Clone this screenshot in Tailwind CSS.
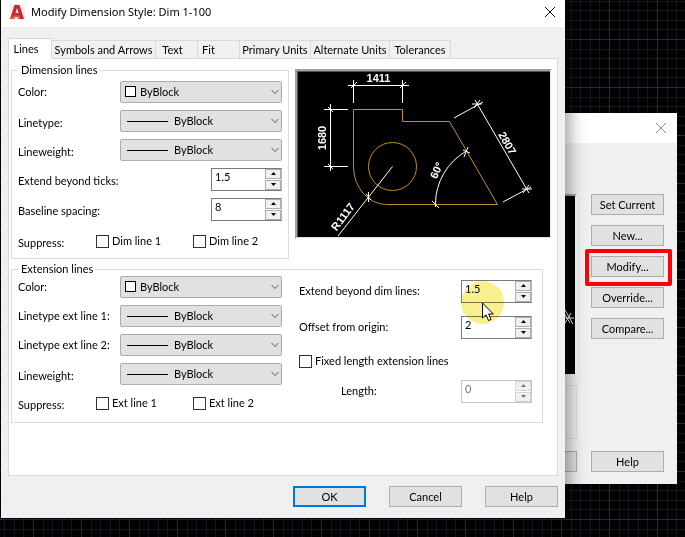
<!DOCTYPE html>
<html lang="en">
<head>
    <meta charset="UTF-8">
    <meta name="viewport" content="width=device-width, initial-scale=1.0">
    <title>Modify Dimension Style</title>
    <script src="https://cdn.jsdelivr.net/npm/@tailwindcss/browser@4"></script>
</head>
<body class="relative h-screen min-h-[520px] overflow-hidden bg-black font-[Lato,'Liberation_Sans',sans-serif] text-[11px] leading-4 text-black">
    <!-- drawing grid -->
    <svg class="absolute inset-0 size-full" aria-hidden="true">
        <defs>
            <pattern id="grid" x="33" y="39" width="48" height="48" patternUnits="userSpaceOnUse">
                <path d="M10.5 0V48M19.5 0V48M29.5 0V48M38.5 0V48M0 10.5H48M0 19.5H48M0 29.5H48M0 38.5H48" stroke="#17171e"/>
                <path d="M.5 0V48M0 .5H48" stroke="#2d2d38"/>
            </pattern>
        </defs>
        <rect width="100%" height="100%" fill="#020204"/>
        <rect width="100%" height="100%" fill="url(#grid)"/>
    </svg>

    <!-- Dimension Style Manager -->
    <section class="absolute top-[113px] right-2 left-[400px] flex h-[371px] flex-col bg-[#f0f0f0]">
        <header class="flex h-[30px] items-center justify-end bg-white px-2.5">
            <button aria-label="Close manager"><svg class="size-3" viewBox="0 0 12 12" stroke="#8a8a8a" fill="none"><path d="M1 1L11 11M11 1L1 11"/></svg></button>
        </header>
        <div class="flex grow justify-end gap-3.5 pt-[51px] pr-[13px]">
            <div class="flex w-[160px] flex-col">
                <svg class="h-[180px] w-full border-t-2 border-r-2 border-t-[#a0a0a0] border-r-white bg-black" viewBox="0 0 158 178" fill="none" stroke="#fff"><path d="M140 100L156 128M146 122H157M147 117L153 127M154 117L148 127"/></svg>
                <div class="mt-[11px] h-[54px] border border-[#dcdcdc]"></div>
                <button class="mt-3 h-[21px] border border-[#adadad] bg-[#e1e1e1]" aria-label="Close"></button>
            </div>
            <div class="flex w-[73px] flex-col gap-2.5">
                <button class="h-[21px] border border-[#adadad] bg-[#e1e1e1]">Set Current</button>
                <button class="h-[21px] border border-[#adadad] bg-[#e1e1e1]">New...</button>
                <div class="relative flex flex-col">
                    <button class="h-[21px] border border-[#adadad] bg-[#e1e1e1]">Modify...</button>
                    <div class="pointer-events-none absolute -top-[7px] -right-2 -bottom-[9px] -left-1.5 z-10 rounded-xs border-4 border-[#fb0007]"></div>
                </div>
                <button class="h-[21px] border border-[#adadad] bg-[#e1e1e1]">Override...</button>
                <button class="h-[21px] border border-[#adadad] bg-[#e1e1e1]">Compare...</button>
                <button class="mt-auto mb-3 h-[21px] border border-[#adadad] bg-[#e1e1e1]">Help</button>
            </div>
        </div>
    </section>

    <!-- Modify Dimension Style -->
    <section class="absolute top-0 right-[120px] left-px bg-[#f0f0f0] shadow-[4px_0_16px_rgba(0,0,0,0.4)]">
        <header class="flex h-[27px] items-center bg-white pr-2.5 pb-1 pl-2">
            <svg class="mr-1.5 size-4" viewBox="0 0 16 16"><path d="M0 0H16V16H0Z" fill="#fbeeee"/><path d="M1 15L5.500 1H10.500L15 15H11L10 12H6.500L5 15Z" fill="#c8282d"/><path d="M8 4L6.500 9H9.700Z" fill="#fbeeee"/><path d="M1 15L5 11.500H10.600L11 15H9L8.500 13H6L5 15Z" fill="#e25a4e"/></svg>
            <h1 class="font-['Noto_Sans',sans-serif] text-[11px] text-black">Modify Dimension Style: Dim 1-100</h1>
            <button class="ml-auto" aria-label="Close dialog"><svg class="size-2.5" viewBox="0 0 10 10" stroke="#111" fill="none"><path d="M0 0L10 10M10 0L0 10"/></svg></button>
        </header>

        <div class="px-[7px] pt-[11px]">
            <nav class="flex h-5 items-end">
                <button class="relative z-10 -mb-px h-[21px] w-11 border border-b-0 border-[#d9d9d9] bg-white pr-2">Lines</button>
                <button class="h-[18px] w-[104px] border-t border-r border-[#d9d9d9]">Symbols and Arrows</button>
                <button class="h-[18px] w-[42px] border-t border-r border-[#d9d9d9] pr-2">Text</button>
                <button class="h-[18px] w-[42px] border-t border-r border-[#d9d9d9] pr-5">Fit</button>
                <button class="h-[18px] w-[71px] border-t border-r border-[#d9d9d9]">Primary Units</button>
                <button class="h-[18px] w-[79px] border-t border-r border-[#d9d9d9]">Alternate Units</button>
                <button class="h-[18px] w-[61px] border-t border-r border-[#d9d9d9]">Tolerances</button>
            </nav>

            <main class="h-[418px] border border-[#d9d9d9] bg-white pt-[3px] pr-[5px] pl-[2px]">
                <div class="flex gap-1.5">
                    <fieldset class="h-[197px] w-[278px] border border-[#dcdcdc] pr-1.5 pl-1.5">
                        <legend class="px-[3px]">Dimension lines</legend>
                        <div class="flex flex-col gap-1.5 pt-0.5">
                            <div class="flex h-[23px] items-center justify-between">
                                <label for="dimColor">Color:</label>
                                <div class="relative w-[162px]">
                                    <select id="dimColor" class="h-[22px] w-full appearance-none rounded-xs border border-[#adadad] bg-[#e1e1e1] pl-[19px]"><option>ByBlock</option></select>
                                    <span class="pointer-events-none absolute top-[5px] left-[5px] size-[11px] border border-black bg-white"></span>
                                    <svg class="pointer-events-none absolute top-2 right-[3px] h-1.5 w-2" viewBox="0 0 8 6" fill="none" stroke="#555"><path d="M.5 1L4 4.500L7.500 1"/></svg>
                                </div>
                            </div>
                            <div class="flex h-[23px] items-center justify-between">
                                <label for="dimLinetype" class="pt-1">Linetype:</label>
                                <div class="relative w-[162px]">
                                    <select id="dimLinetype" class="h-[22px] w-full appearance-none rounded-xs border border-[#adadad] bg-[#e1e1e1] pl-[53px]"><option>ByBlock</option></select>
                                    <span class="pointer-events-none absolute top-[11px] left-[7px] h-px w-[41px] bg-black"></span>
                                    <svg class="pointer-events-none absolute top-2 right-[3px] h-1.5 w-2" viewBox="0 0 8 6" fill="none" stroke="#555"><path d="M.5 1L4 4.500L7.500 1"/></svg>
                                </div>
                            </div>
                            <div class="flex h-[23px] items-center justify-between">
                                <label for="dimLineweight" class="pt-1">Lineweight:</label>
                                <div class="relative w-[162px]">
                                    <select id="dimLineweight" class="h-[22px] w-full appearance-none rounded-xs border border-[#adadad] bg-[#e1e1e1] pl-[53px]"><option>ByBlock</option></select>
                                    <span class="pointer-events-none absolute top-[11px] left-[7px] h-px w-[41px] bg-black"></span>
                                    <svg class="pointer-events-none absolute top-2 right-[3px] h-1.5 w-2" viewBox="0 0 8 6" fill="none" stroke="#555"><path d="M.5 1L4 4.500L7.500 1"/></svg>
                                </div>
                            </div>
                            <div class="flex h-6 items-center justify-between">
                                <label for="ticks" class="pt-1">Extend beyond ticks:</label>
                                <div class="flex h-[23px] w-[71px] border border-[#7a7a7a] border-r-[#b4b4b4]">
                                    <input id="ticks" type="text" value="1.5" class="mb-1 min-w-0 grow pl-[3px]">
                                    <div class="flex w-4 shrink-0 flex-col gap-px">
                                        <button class="flex grow items-center justify-center border border-[#adadad] bg-[#f0f0f0]" aria-label="Increase ticks"><svg class="h-[3px] w-[5px]" viewBox="0 0 5 3"><path d="M0 3L2.500 0L5 3Z"/></svg></button>
                                        <button class="flex grow items-center justify-center border border-[#adadad] bg-[#f0f0f0]" aria-label="Decrease ticks"><svg class="h-[3px] w-[5px]" viewBox="0 0 5 3"><path d="M0 0L2.500 3L5 0Z"/></svg></button>
                                    </div>
                                </div>
                            </div>
                            <div class="flex h-6 items-center justify-between">
                                <label for="baseline" class="pt-1">Baseline spacing:</label>
                                <div class="flex h-[23px] w-[71px] border border-[#7a7a7a] border-r-[#b4b4b4]">
                                    <input id="baseline" type="text" value="8" class="mb-1 min-w-0 grow pl-[3px]">
                                    <div class="flex w-4 shrink-0 flex-col gap-px">
                                        <button class="flex grow items-center justify-center border border-[#adadad] bg-[#f0f0f0]" aria-label="Increase spacing"><svg class="h-[3px] w-[5px]" viewBox="0 0 5 3"><path d="M0 3L2.500 0L5 3Z"/></svg></button>
                                        <button class="flex grow items-center justify-center border border-[#adadad] bg-[#f0f0f0]" aria-label="Decrease spacing"><svg class="h-[3px] w-[5px]" viewBox="0 0 5 3"><path d="M0 0L2.500 3L5 0Z"/></svg></button>
                                    </div>
                                </div>
                            </div>
                            <div class="flex h-7 items-center">
                                <span class="w-[78px] pt-1">Suppress:</span>
                                <label class="flex w-[97px] items-center gap-[3px]"><input type="checkbox" class="size-[13px] appearance-none border border-[#333] bg-white">Dim line 1</label>
                                <label class="flex items-center gap-[3px]"><input type="checkbox" class="size-[13px] appearance-none border border-[#333] bg-white">Dim line 2</label>
                            </div>
                        </div>
                    </fieldset>

                    <svg class="mt-[7px] h-[170px] min-w-0 grow" viewBox="295 69 257 170" fill="none" stroke="#fff" font-family="Liberation Sans, sans-serif" font-size="11" font-weight="bold" text-anchor="middle">
                        <path d="M295 69H552L550 71H297V237L295 239Z" fill="#a0a0a0" stroke="none"/>
                        <rect x="297" y="71" width="253" height="166" fill="#000" stroke="none"/>
                        <path d="M297 71.500H550M297.500 71V237" stroke="#555"/>
                        <path d="M297 237.500H550.500V71" stroke="#e3e3e3"/>
                        <g stroke="#c0902a">
                            <path d="M353.500 109.500H402.500V121.500H449.500L497.500 204.500H386.500A33 38 0 0 1 353.500 166.500Z"/>
                            <circle cx="392.500" cy="166.500" r="24"/>
                        </g>
                        <path d="M348 85.500H409M353.500 80V103M402.500 80V103M351 88L357 82M400 88L406 82"/>
                        <path d="M330.500 104V171M324 109.500H348M324 166.500H348M328 107L333 112M328 164L333 169"/>
                        <path d="M475 100L529 193M454 118L483 102M503 202L531 187M472 104H482M480 100L474 108M522 189H532M523 193L529 185"/>
                        <path d="M435.500 204.500A61 61 0 0 1 466.500 151M432 201L439 208M463 150L470 153M468 147L464 157M435.500 204V207"/>
                        <path d="M392.500 166.500L338 236M368.500 192V202M366 194L371 200"/>
                        <g fill="#fff" stroke="none">
                            <text x="378.500" y="82">1411</text>
                            <text transform="translate(326 138) rotate(-90)">1680</text>
                            <text transform="translate(504 145) rotate(60)">2807</text>
                            <text transform="translate(440 172) rotate(-65)">60°</text>
                            <text transform="translate(346 219) rotate(-53)">R1117</text>
                        </g>
                    </svg>
                </div>

                <fieldset class="mt-0.5 mr-[9px] flex h-[162px] justify-between border border-[#dcdcdc] pr-2.5 pl-1.5">
                    <legend class="px-[3px]">Extension lines</legend>
                    <div class="-mt-0.5 flex w-[264px] flex-col gap-1.5">
                        <div class="flex h-[23px] items-center justify-between">
                            <label for="extColor">Color:</label>
                            <div class="relative w-[162px]">
                                <select id="extColor" class="h-[22px] w-full appearance-none rounded-xs border border-[#adadad] bg-[#e1e1e1] pl-[19px]"><option>ByBlock</option></select>
                                <span class="pointer-events-none absolute top-[5px] left-[5px] size-[11px] border border-black bg-white"></span>
                                <svg class="pointer-events-none absolute top-2 right-[3px] h-1.5 w-2" viewBox="0 0 8 6" fill="none" stroke="#555"><path d="M.5 1L4 4.500L7.500 1"/></svg>
                            </div>
                        </div>
                        <div class="flex h-[23px] items-center justify-between">
                            <label for="extLine1">Linetype ext line 1:</label>
                            <div class="relative w-[162px]">
                                <select id="extLine1" class="h-[22px] w-full appearance-none rounded-xs border border-[#adadad] bg-[#e1e1e1] pl-[53px]"><option>ByBlock</option></select>
                                <span class="pointer-events-none absolute top-[11px] left-[7px] h-px w-[41px] bg-black"></span>
                                <svg class="pointer-events-none absolute top-2 right-[3px] h-1.5 w-2" viewBox="0 0 8 6" fill="none" stroke="#555"><path d="M.5 1L4 4.500L7.500 1"/></svg>
                            </div>
                        </div>
                        <div class="flex h-[23px] items-center justify-between">
                            <label for="extLine2">Linetype ext line 2:</label>
                            <div class="relative w-[162px]">
                                <select id="extLine2" class="h-[22px] w-full appearance-none rounded-xs border border-[#adadad] bg-[#e1e1e1] pl-[53px]"><option>ByBlock</option></select>
                                <span class="pointer-events-none absolute top-[11px] left-[7px] h-px w-[41px] bg-black"></span>
                                <svg class="pointer-events-none absolute top-2 right-[3px] h-1.5 w-2" viewBox="0 0 8 6" fill="none" stroke="#555"><path d="M.5 1L4 4.500L7.500 1"/></svg>
                            </div>
                        </div>
                        <div class="flex h-[23px] items-center justify-between">
                            <label for="extLineweight" class="pt-1">Lineweight:</label>
                            <div class="relative w-[162px]">
                                <select id="extLineweight" class="h-[22px] w-full appearance-none rounded-xs border border-[#adadad] bg-[#e1e1e1] pl-[53px]"><option>ByBlock</option></select>
                                <span class="pointer-events-none absolute top-[11px] left-[7px] h-px w-[41px] bg-black"></span>
                                <svg class="pointer-events-none absolute top-2 right-[3px] h-1.5 w-2" viewBox="0 0 8 6" fill="none" stroke="#555"><path d="M.5 1L4 4.500L7.500 1"/></svg>
                            </div>
                        </div>
                        <div class="flex h-6 items-center">
                            <span class="w-[78px] pt-1">Suppress:</span>
                            <label class="flex w-[97px] items-center gap-[3px]"><input type="checkbox" class="size-[13px] appearance-none border border-[#333] bg-white">Ext line 1</label>
                            <label class="flex items-center gap-[3px]"><input type="checkbox" class="size-[13px] appearance-none border border-[#333] bg-white">Ext line 2</label>
                        </div>
                    </div>

                    <div class="flex w-[233px] flex-col gap-3 pt-0.5">
                        <div class="flex h-6 items-center justify-between">
                            <label for="extend">Extend beyond dim lines:</label>
                            <div class="relative flex h-[23px] w-[71px] border border-[#7a7a7a] border-r-[#b4b4b4]">
                                <input id="extend" type="text" value="1.5" class="mb-1 min-w-0 grow pl-[3px]">
                                <div class="flex w-4 shrink-0 flex-col gap-px">
                                    <button class="flex grow items-center justify-center border border-[#adadad] bg-[#f0f0f0]" aria-label="Increase extension"><svg class="h-[3px] w-[5px]" viewBox="0 0 5 3"><path d="M0 3L2.500 0L5 3Z"/></svg></button>
                                    <button class="flex grow items-center justify-center border border-[#adadad] bg-[#f0f0f0]" aria-label="Decrease extension"><svg class="h-[3px] w-[5px]" viewBox="0 0 5 3"><path d="M0 0L2.500 3L5 0Z"/></svg></button>
                                </div>
                                <!-- click highlight and pointer -->
                                <div class="pointer-events-none absolute top-0 -left-px z-10 size-[43px] rounded-full bg-[#f8f08c] mix-blend-multiply"></div>
                                <svg class="pointer-events-none absolute top-[21px] left-5 z-20 h-5 w-3" viewBox="0 0 12 20" fill="#fff" stroke="#000"><path d="M.5 1V16L4 12.800L6.500 18.500L9 17.400L6.600 12H11.300Z"/></svg>
                            </div>
                        </div>
                        <div class="flex h-6 items-center justify-between">
                            <label for="offset">Offset from origin:</label>
                            <div class="flex h-[23px] w-[71px] border border-[#7a7a7a] border-r-[#b4b4b4]">
                                <input id="offset" type="text" value="2" class="mb-1 min-w-0 grow pl-[3px]">
                                <div class="flex w-4 shrink-0 flex-col gap-px">
                                    <button class="flex grow items-center justify-center border border-[#adadad] bg-[#f0f0f0]" aria-label="Increase offset"><svg class="h-[3px] w-[5px]" viewBox="0 0 5 3"><path d="M0 3L2.500 0L5 3Z"/></svg></button>
                                    <button class="flex grow items-center justify-center border border-[#adadad] bg-[#f0f0f0]" aria-label="Decrease offset"><svg class="h-[3px] w-[5px]" viewBox="0 0 5 3"><path d="M0 0L2.500 3L5 0Z"/></svg></button>
                                </div>
                            </div>
                        </div>
                        <label class="flex h-5 items-center gap-[3px]"><input type="checkbox" class="size-[13px] appearance-none border border-[#333] bg-white">Fixed length extension lines</label>
                        <div class="-mt-1 flex h-6 items-center justify-between pl-[42px]">
                            <label for="length">Length:</label>
                            <div class="flex h-[23px] w-[71px] border border-[#c4c4c4]">
                                <input id="length" type="text" value="0" disabled class="mb-1 min-w-0 grow pl-[3px] text-[#777]">
                                <div class="flex w-4 shrink-0 flex-col gap-px">
                                    <button disabled class="flex grow items-center justify-center border border-[#d4d4d4] bg-[#f0f0f0]" aria-label="Increase length"><svg class="h-[3px] w-[5px]" viewBox="0 0 5 3"><path d="M0 3L2.500 0L5 3Z" fill="#777"/></svg></button>
                                    <button disabled class="flex grow items-center justify-center border border-[#d4d4d4] bg-[#f0f0f0]" aria-label="Decrease length"><svg class="h-[3px] w-[5px]" viewBox="0 0 5 3"><path d="M0 0L2.500 3L5 0Z" fill="#777"/></svg></button>
                                </div>
                            </div>
                        </div>
                    </div>
                </fieldset>
            </main>

            <footer class="flex h-[42px] justify-end gap-[23px] pt-2.5">
                <button class="h-[21px] w-[73px] border-2 border-[#0078d7] bg-[#e1e1e1] leading-3">OK</button>
                <button class="h-[21px] w-[73px] border border-[#adadad] bg-[#e1e1e1]">Cancel</button>
                <button class="h-[21px] w-[73px] border border-[#adadad] bg-[#e1e1e1]">Help</button>
            </footer>
        </div>
    </section>
</body>
</html>
